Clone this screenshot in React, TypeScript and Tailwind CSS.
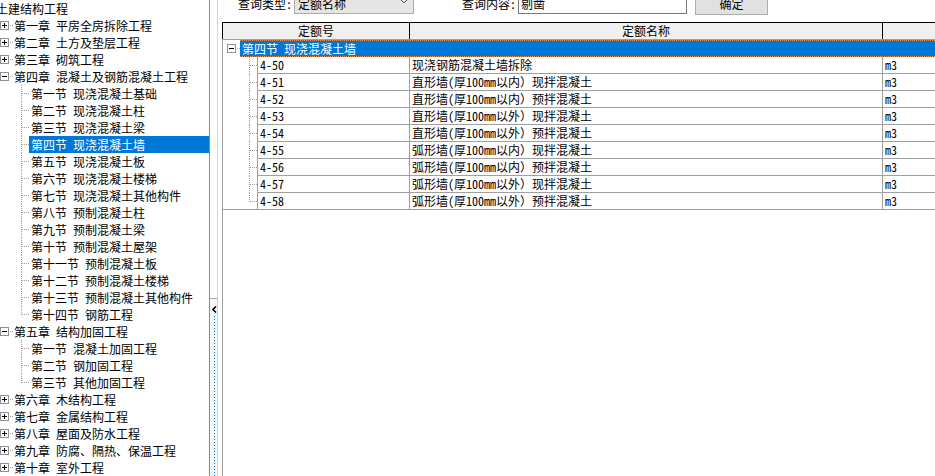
import React from 'react';

type TreeNode = {
  text: string;
  kind: 'root' | 'chapter' | 'section';
  open?: boolean;
  last?: boolean;
  selected?: boolean;
};

const tree: TreeNode[] = [
  { text: '土建结构工程', kind: 'root' },
  { text: '第一章 平房全房拆除工程', kind: 'chapter' },
  { text: '第二章 土方及垫层工程', kind: 'chapter' },
  { text: '第三章 砌筑工程', kind: 'chapter' },
  { text: '第四章 混凝土及钢筋混凝土工程', kind: 'chapter', open: true },
  { text: '第一节 现浇混凝土基础', kind: 'section' },
  { text: '第二节 现浇混凝土柱', kind: 'section' },
  { text: '第三节 现浇混凝土梁', kind: 'section' },
  { text: '第四节 现浇混凝土墙', kind: 'section', selected: true },
  { text: '第五节 现浇混凝土板', kind: 'section' },
  { text: '第六节 现浇混凝土楼梯', kind: 'section' },
  { text: '第七节 现浇混凝土其他构件', kind: 'section' },
  { text: '第八节 预制混凝土柱', kind: 'section' },
  { text: '第九节 预制混凝土梁', kind: 'section' },
  { text: '第十节 预制混凝土屋架', kind: 'section' },
  { text: '第十一节 预制混凝土板', kind: 'section' },
  { text: '第十二节 预制混凝土楼梯', kind: 'section' },
  { text: '第十三节 预制混凝土其他构件', kind: 'section' },
  { text: '第十四节 钢筋工程', kind: 'section', last: true },
  { text: '第五章 结构加固工程', kind: 'chapter', open: true },
  { text: '第一节 混凝土加固工程', kind: 'section' },
  { text: '第二节 钢加固工程', kind: 'section' },
  { text: '第三节 其他加固工程', kind: 'section', last: true },
  { text: '第六章 木结构工程', kind: 'chapter' },
  { text: '第七章 金属结构工程', kind: 'chapter' },
  { text: '第八章 屋面及防水工程', kind: 'chapter' },
  { text: '第九章 防腐、隔热、保温工程', kind: 'chapter' },
  { text: '第十章 室外工程', kind: 'chapter' },
];

const rows: [string, string, string][] = [
  ['4-50', '现浇钢筋混凝土墙拆除', 'm3'],
  ['4-51', '直形墙(厚100mm以内）现拌混凝土', 'm3'],
  ['4-52', '直形墙(厚100mm以内）预拌混凝土', 'm3'],
  ['4-53', '直形墙(厚100mm以外）现拌混凝土', 'm3'],
  ['4-54', '直形墙(厚100mm以外）预拌混凝土', 'm3'],
  ['4-55', '弧形墙(厚100mm以内）现拌混凝土', 'm3'],
  ['4-56', '弧形墙(厚100mm以内）预拌混凝土', 'm3'],
  ['4-57', '弧形墙(厚100mm以外）现拌混凝土', 'm3'],
  ['4-58', '弧形墙(厚100mm以外）预拌混凝土', 'm3'],
];

const ExpandBox: React.FC<{ open?: boolean }> = ({ open }) => (
  <svg width="9" height="9" viewBox="0 0 9 9" shapeRendering="crispEdges" className="flex-none">
    <rect x="0.5" y="0.5" width="8" height="8" fill="#fff" stroke="#919191" />
    <line x1="2" y1="4.5" x2="7" y2="4.5" stroke="#000" />
    {!open && <line x1="4.5" y1="2" x2="4.5" y2="7" stroke="#000" />}
  </svg>
);

// dotted tree connector: vertical at x, stub to the right edge
const Connector: React.FC<{ x: number; w: number; last?: boolean }> = ({ x, w, last }) => (
  <svg width={w} height="17" shapeRendering="crispEdges" className="flex-none">
    <line x1={x + 0.5} y1="0" x2={x + 0.5} y2={last ? 9 : 17} stroke="#a0a0a0" strokeDasharray="1 1" />
    <line x1={x + 1} y1="8.5" x2={w} y2="8.5" stroke="#a0a0a0" strokeDasharray="1 1" />
  </svg>
);

const Stub: React.FC<{ w: number }> = ({ w }) => (
  <svg width={w} height="1" shapeRendering="crispEdges" className="flex-none">
    <line x1="1" y1="0.5" x2={w} y2="0.5" stroke="#a0a0a0" strokeDasharray="1 1" />
  </svg>
);

const Label: React.FC<{ text: string }> = ({ text }) => {
  const [a, b] = text.split(' ');
  return (
    <span className="whitespace-nowrap">
      {a}
      {b !== undefined && <span className="inline-block w-[6px]" />}
      {b}
    </span>
  );
};

const TreeRow: React.FC<{ node: TreeNode }> = ({ node }) => {
  if (node.kind === 'root') {
    return (
      <div className="flex h-[17px] items-center -ml-[4px]">
        <Label text={node.text} />
      </div>
    );
  }
  if (node.kind === 'chapter') {
    return (
      <div className="flex h-[17px] items-center">
        <div className="flex w-[14px] flex-none items-center">
          <ExpandBox open={node.open} />
          <Stub w={5} />
        </div>
        <Label text={node.text} />
      </div>
    );
  }
  return (
    <div className="flex h-[17px] items-center">
      <Connector x={21} w={29} last={node.last} />
      <div
        className={`flex h-full flex-1 items-center pl-[2px] ${
          node.selected ? 'bg-[#0078d7] text-white' : ''
        }`}
      >
        <Label text={node.text} />
      </div>
    </div>
  );
};

const Splitter = () => (
  <div className="flex w-[9px] flex-none flex-col border-l border-r border-l-[#8c8c8c] border-r-[#d4d4d4] bg-white">
    <div className="h-[298px] flex-none" />
    <div className="flex flex-1 flex-col border-t border-[#a8a8a8] bg-[#f7f7f7]">
      <svg width="5" height="7" viewBox="0 0 5 7" className="ml-[2px] mt-[7px] flex-none">
        <polyline points="4,0.5 1,3.5 4,6.5" fill="none" stroke="#000" strokeWidth="1.6" />
      </svg>
      <div className="ml-[4px] mt-[3px] w-px flex-1 bg-[repeating-linear-gradient(to_bottom,#0078d7_0_1px,transparent_1px_3px)]" />
    </div>
  </div>
);

const Toolbar = () => (
  <div className="h-[22px] flex-none pl-[20px]">
    <div className="-mt-[8px] flex h-[23px] items-center">
      <span className="w-[56px] flex-none">查询类型:</span>
      <div className="flex h-[21px] w-[120px] flex-none items-center justify-between border border-[#adadad] bg-[#e5e5e5] pl-[3px] pr-[5px]">
        <span>定额名称</span>
        <svg width="8" height="5" viewBox="0 0 8 5" className="mb-[5px]">
          <polyline points="0.5,0.5 4,4 7.5,0.5" fill="none" stroke="#555" />
        </svg>
      </div>
      <span className="ml-[48px] w-[56px] flex-none">查询内容:</span>
      <div className="flex h-[21px] w-[169px] flex-none items-center border border-[#7a7a7a] bg-white pl-[2px]">
        剔凿
      </div>
      <button className="ml-[8px] flex h-[23px] w-[73px] flex-none items-center justify-center border border-[#adadad] bg-[#e1e1e1]">
        确定
      </button>
    </div>
  </div>
);

const Grid = () => (
  <div className="ml-[4px] flex flex-1 flex-col">
    <div className="flex h-[18px] flex-none border-t border-b border-t-black border-b-[#a0a0a0] bg-[#f0f0f0]">
      <div className="flex w-[187px] flex-none items-center justify-center border-l border-black">定额号</div>
      <div className="flex w-[473px] flex-none items-center justify-center border-l border-black">定额名称</div>
      <div className="w-[200px] flex-none border-l border-black" />
    </div>
    <div className="flex h-[17px] flex-none border-l border-[#a0a0a0]">
      <div className="flex w-[17px] flex-none items-center pl-[4px]">
        <ExpandBox open />
        <Stub w={4} />
      </div>
      <div className="flex flex-1 items-center border-y border-dotted border-[#e8904a] bg-[#0078d7] pl-[2px] text-white">
        <Label text="第四节 现浇混凝土墙" />
      </div>
    </div>
    {rows.map(([code, name, unit], i) => {
      const last = i === rows.length - 1;
      return (
        <div key={code} className="flex h-[17px] flex-none border-l border-[#a0a0a0]">
          <div className={`flex w-[34px] flex-none ${last ? 'border-b border-[#a0a0a0]' : ''}`}>
            <Connector x={26} w={34} last={last} />
          </div>
          <div className="flex w-[152px] flex-none items-center border-l border-b border-[#a0a0a0] pl-[2px]">{code}</div>
          <div className="flex w-[473px] flex-none items-center border-l border-b border-[#a0a0a0] pl-[2px]">
            <span className="whitespace-nowrap">{name}</span>
          </div>
          <div className="flex w-[200px] flex-none items-center border-l border-b border-[#a0a0a0] pl-[2px]">{unit}</div>
        </div>
      );
    })}
    <div className="flex-1 border-l border-[#a0a0a0]" />
  </div>
);

export default function App() {
  return (
    <div className="flex h-[476px] w-[935px] overflow-hidden bg-white font-['Noto_Sans_Mono_CJK_SC','Noto_Sans_CJK_SC',sans-serif] text-[12px] leading-[16px] text-black">
      <div className="w-[209px] flex-none overflow-hidden">
        {tree.map((n, i) => (
          <TreeRow key={i} node={n} />
        ))}
      </div>
      <Splitter />
      <div className="flex min-w-0 flex-1 flex-col overflow-hidden">
        <Toolbar />
        <Grid />
      </div>
    </div>
  );
}
